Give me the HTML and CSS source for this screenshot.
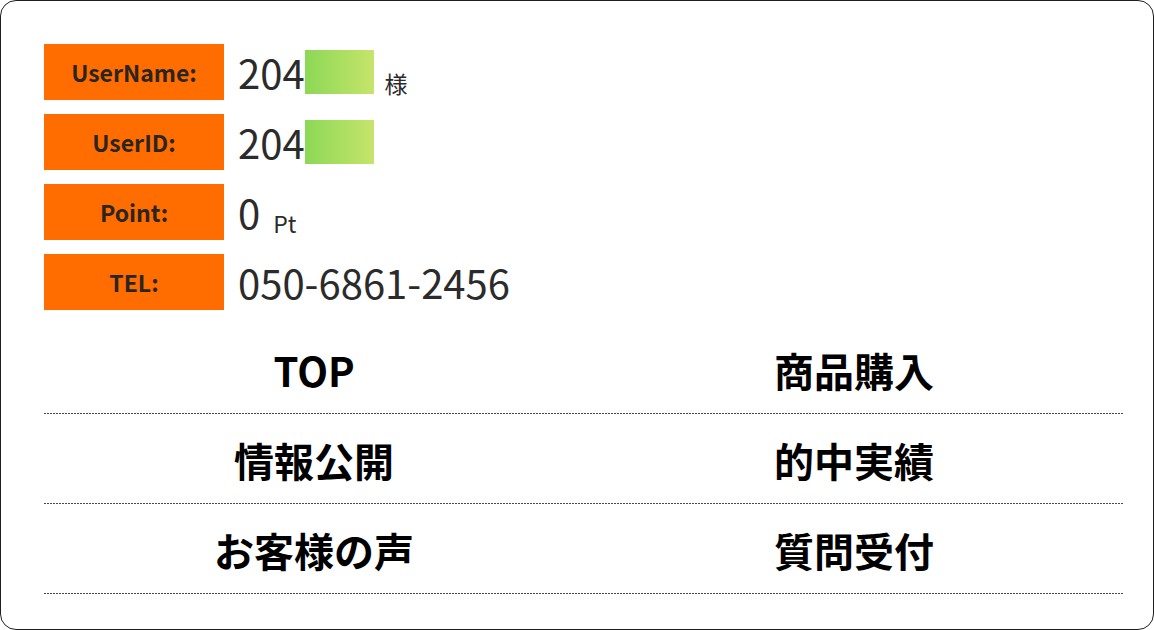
FILE: index.html
```html
<!DOCTYPE html>
<html lang="ja">
<head>
<meta charset="utf-8">
<title>Member</title>
<link rel="stylesheet" href="styles.css">
</head>
<body>
<div class="card">
  <div class="info">
    <div class="row">
      <div class="label">UserName:</div>
      <div class="value"><span class="num">204</span><span class="mask"></span><span class="suffix sama">様</span></div>
    </div>
    <div class="row">
      <div class="label">UserID:</div>
      <div class="value"><span class="num">204</span><span class="mask"></span></div>
    </div>
    <div class="row">
      <div class="label">Point:</div>
      <div class="value"><span class="num">0</span><span class="suffix pt">Pt</span></div>
    </div>
    <div class="row">
      <div class="label">TEL:</div>
      <div class="value"><span class="num">050-6861-2456</span></div>
    </div>
  </div>
  <nav class="menu">
    <a class="item" href="#">TOP</a>
    <a class="item" href="#">商品購入</a>
    <a class="item" href="#">情報公開</a>
    <a class="item" href="#">的中実績</a>
    <a class="item" href="#">お客様の声</a>
    <a class="item" href="#">質問受付</a>
  </nav>
</div>
</body>
</html>
```
FILE: styles.css
```css
html, body {
  margin: 0;
  padding: 0;
  background: #ffffff;
}
.card {
  box-sizing: border-box;
  width: 1154px;
  height: 630px;
  border: 1px solid #1e1e1e;
  border-radius: 16px;
  padding: 43px 29px 0 43px;
  background: #ffffff;
}
.info {
  display: flex;
  flex-direction: column;
  gap: 14px;
}
.row {
  display: flex;
  align-items: center;
  height: 56px;
}
.label {
  width: 180px;
  height: 56px;
  background: #ff6c00;
  display: flex;
  align-items: center;
  justify-content: center;
  font-family: "Noto Sans CJK JP", "Noto Sans", sans-serif;
  font-weight: 700;
  font-size: 23px;
  line-height: 1;
  color: #2a2520;
}
.value {
  display: flex;
  align-items: center;
  margin-left: 14px;
  font-family: "Noto Sans CJK JP", "Noto Sans", sans-serif;
  color: #2b2b2b;
}
.num {
  font-size: 40px;
  line-height: 1;
}
.mask {
  display: block;
  width: 69px;
  height: 44px;
  background: linear-gradient(to right, #8cd856, #c6e46b);
}
.suffix {
  font-size: 23px;
  line-height: 1;
}
.sama {
  margin-left: 11px;
  padding-top: 22px;
}
.pt {
  margin-left: 13px;
  padding-top: 22px;
}
.menu {
  display: grid;
  grid-template-columns: 1fr 1fr;
  margin-top: 14px;
}
.item {
  box-sizing: content-box;
  height: 87px;
  padding-top: 2px;
  padding-bottom: 1px;
  background-image: linear-gradient(to right, #4a4a4a 2px, transparent 2px);
  background-size: 3px 1px;
  background-repeat: repeat-x;
  background-position: left bottom;
  display: flex;
  align-items: center;
  justify-content: center;
  font-family: "Noto Sans CJK JP", sans-serif;
  font-weight: 700;
  font-size: 40px;
  line-height: 1;
  color: #000000;
  text-decoration: none;
}
```
